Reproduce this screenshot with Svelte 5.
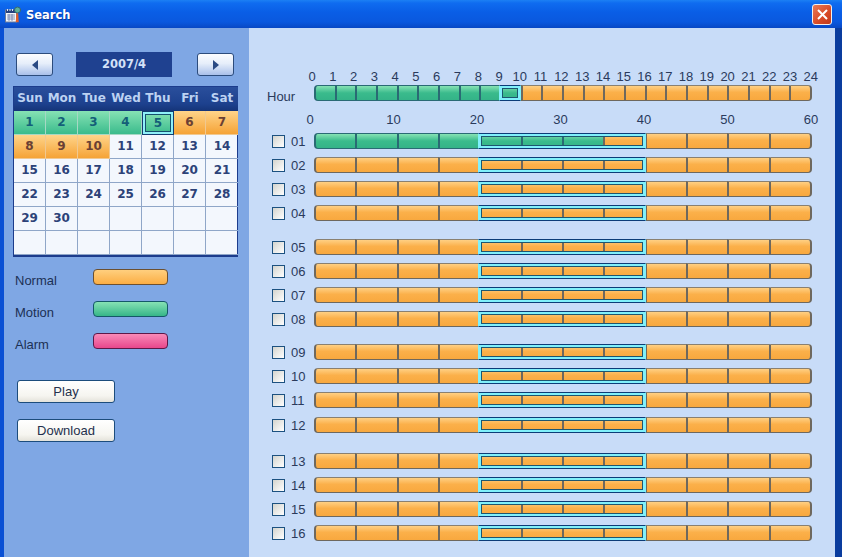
<script lang="ts">
	// Playback search dialog: month calendar on the left, channel timelines on the right.
	const weekdays = ['Sun', 'Mon', 'Tue', 'Wed', 'Thu', 'Fri', 'Sat'];
	const motionDays = [1, 2, 3, 4, 5];
	const normalDays = [6, 7, 8, 9, 10];
	const selectedDay = 5;
	const days: (number | null)[] = [
		...Array.from({ length: 30 }, (_, i) => i + 1),
		...Array(12).fill(null)
	];

	const hourLabels = Array.from({ length: 25 }, (_, i) => i);
	const minuteLabels = [0, 10, 20, 30, 40, 50, 60];
	const legend = [
		{ label: 'Normal', kind: 'normal' },
		{ label: 'Motion', kind: 'motion' },
		{ label: 'Alarm', kind: 'alarm' }
	];

	const groups = [
		[1, 2, 3, 4],
		[5, 6, 7, 8],
		[9, 10, 11, 12],
		[13, 14, 15, 16]
	];

	function channelMotion(ch: number) {
		return ch === 1 ? 7 : 0;
	}

	function dayClass(d: number | null) {
		if (d === null) return '';
		if (motionDays.includes(d)) return 'motion';
		if (normalDays.includes(d)) return 'normal';
		return '';
	}

	const pad = (n: number) => String(n).padStart(2, '0');
</script>

{#snippet timeline(count: number, motion: number, selStart: number, selWidth: number)}
	<div class="bar">
		{#each Array(count) as _, i}
			<span class="seg" class:motion={i < motion}></span>
		{/each}
		<span class="sel" style="left: {selStart}px; width: {selWidth}px"></span>
	</div>
{/snippet}

<div class="window">
	<header class="titlebar">
		<svg class="app-icon" viewBox="0 0 17 17" width="17" height="17">
			<rect x="0.5" y="4" width="11" height="12" fill="#f4f6fa" stroke="#6a7a9a" />
			<rect x="1" y="4" width="10" height="3" fill="#24407f" />
			<path d="M2 9h8M2 11h8M2 13h8M4 8v7M7 8v7" stroke="#6a7ca8" stroke-width="0.8" />
			<path d="M2.5 3v2M5 3v2M7.5 3v2" stroke="#dfe6f4" stroke-width="1" />
			<circle cx="12.5" cy="4" r="3" fill="#5cb09c" stroke="#35666c" />
			<path d="M11.2 7.2l-.4 9h3l-.6-9z" fill="#e0602a" />
		</svg>
		<span class="title">Search</span>
		<button class="close" aria-label="Close">
			<svg viewBox="0 0 11 11" width="11" height="11">
				<path d="M1 1l9 9M10 1l-9 9" stroke="#fff" stroke-width="2" />
			</svg>
		</button>
	</header>

	<div class="body">
		<aside class="sidebar">
			<div class="month-nav">
				<button class="nav-btn" aria-label="Previous month"><span class="arrow left"></span></button>
				<div class="month">2007/4</div>
				<button class="nav-btn" aria-label="Next month"><span class="arrow right"></span></button>
			</div>

			<div class="calendar">
				{#each weekdays as w}
					<div class="weekday">{w}</div>
				{/each}
				{#each days as d}
					<div class="day {dayClass(d)}" class:selected={d === selectedDay}>{d ?? ''}</div>
				{/each}
			</div>

			<div class="legend">
				{#each legend as item}
					<span class="legend-label">{item.label}</span>
					<span class="swatch {item.kind}"></span>
				{/each}
			</div>

			<div class="actions">
				<button class="action">Play</button>
				<button class="action">Download</button>
			</div>
		</aside>

		<main class="content">
			<div class="ticks hours">
				{#each hourLabels as h}
					<span>{h}</span>
				{/each}
			</div>
			<div class="row hour-row">
				<span class="hour-label">Hour</span>
				{@render timeline(24, 10, 185, 22)}
			</div>
			<div class="ticks minutes">
				{#each minuteLabels as m}
					<span>{m}</span>
				{/each}
			</div>

			{#each groups as group}
				<div class="group">
					{#each group as ch}
						<div class="row">
							<input class="check" type="checkbox" aria-label="Channel {ch}" />
							<span class="channel">{pad(ch)}</span>
							{@render timeline(12, channelMotion(ch), 164, 168)}
						</div>
					{/each}
				</div>
			{/each}
		</main>
	</div>
</div>

<style>
	:global(body) {
		margin: 0;
	}

	.window {
		display: flex;
		flex-direction: column;
		width: 842px;
		height: 557px;
		overflow: hidden;
		font-family: 'Liberation Sans', Arial, sans-serif;
		font-size: 13px;
		color: #2a3a5c;
	}

	.titlebar {
		display: flex;
		align-items: center;
		flex: 0 0 28px;
		box-sizing: border-box;
		padding: 0 10px 0 5px;
		background: linear-gradient(#1c80f4 0, #0f6cf0 3px, #0a5ee6 12px, #0a58de 22px, #0848c4 28px);
	}

	.app-icon {
		margin-right: 4px;
	}

	.title {
		padding-top: 2px;
		color: #fff;
		font-family: 'DejaVu Sans', sans-serif;
		font-weight: 700;
		font-size: 11.5px;
		text-shadow: 1px 1px 0 #0a3a9c;
	}

	.close {
		display: flex;
		align-items: center;
		justify-content: center;
		box-sizing: border-box;
		width: 20px;
		height: 21px;
		margin-left: auto;
		padding: 0;
		border: 1px solid #f4f0ec;
		border-radius: 3px;
		background: linear-gradient(135deg, #e87a58, #d84a26 60%, #c03a1c);
	}

	.body {
		display: flex;
		flex: 1;
		min-height: 0;
		border-left: 4px solid #0a50d4;
		border-right: 7px solid #0a3c9e;
	}

	/* Left column */
	.sidebar {
		flex: 0 0 245px;
		box-sizing: border-box;
		padding: 24px 0 0 9px;
		background: #7fa7e4;
	}

	.month-nav {
		display: flex;
		align-items: center;
		justify-content: space-between;
		width: 218px;
		margin-left: 3px;
	}

	.nav-btn {
		display: flex;
		align-items: center;
		justify-content: center;
		box-sizing: border-box;
		width: 37px;
		height: 23px;
		padding: 0;
		border: 1px solid #2c4c7c;
		border-radius: 3px;
		background: linear-gradient(#fbfcff, #e6eefa 45%, #a9c0ea);
	}

	.arrow {
		width: 0;
		height: 0;
		border-top: 5px solid transparent;
		border-bottom: 5px solid transparent;
	}

	.arrow.left {
		border-right: 6px solid #2a4a84;
	}

	.arrow.right {
		border-left: 6px solid #2a4a84;
	}

	.month {
		width: 96px;
		height: 25px;
		margin-right: 2px;
		line-height: 25px;
		text-align: center;
		background: #1f4190;
		color: #d4e2f8;
		font-family: 'DejaVu Sans', sans-serif;
		font-weight: 700;
		font-size: 11.5px;
	}

	.calendar {
		display: grid;
		grid-template-columns: repeat(7, 32px);
		grid-auto-rows: 24px;
		width: 225px;
		box-sizing: border-box;
		margin-top: 9px;
		border: solid #1c3c8c;
		border-width: 1px 1px 2px 1px;
		background: #f3f7fd;
	}

	.weekday {
		text-align: center;
		line-height: 22px;
		background: linear-gradient(#2a4f9c, #1d418e 70%, #153478);
		color: #bcd2f2;
		font-family: 'DejaVu Sans', sans-serif;
		font-weight: 700;
		font-size: 12px;
		white-space: nowrap;
	}

	.day {
		box-sizing: border-box;
		border-right: 1px solid #8fa6c8;
		border-bottom: 1px solid #8fa6c8;
		text-align: center;
		line-height: 23px;
		color: #2c4278;
		font-family: 'DejaVu Sans', sans-serif;
		font-weight: 700;
		font-size: 12px;
	}

	.day:nth-child(7n) {
		border-right: none;
	}

	.day.motion {
		background: linear-gradient(#86e2b4, #3abb8c);
		color: #145f78;
		border-color: #a6d8c4;
	}

	.day.normal {
		background: linear-gradient(#ffd48a, #f5a336);
		color: #6a4034;
		border-color: #f0c890;
	}

	.day.selected {
		border: 1px solid #123c70;
		box-shadow: inset 0 0 0 2px #8ff0f8, inset 0 0 0 3px #14506e;
	}

	.legend {
		display: grid;
		grid-template-columns: 78px 75px;
		grid-auto-rows: 16px;
		row-gap: 16px;
		align-items: center;
		margin: 12px 0 0 2px;
	}

	.legend-label {
		position: relative;
		top: 3px;
		color: #1c3054;
	}

	.swatch {
		height: 16px;
		box-sizing: border-box;
		border: 1px solid #44505c;
		border-radius: 4px;
	}

	.swatch.normal {
		background: linear-gradient(#ffcf7e, #fbae44);
		border-color: #6c5030;
	}

	.swatch.motion {
		background: linear-gradient(#86e2b4, #36b688);
		border-color: #145868;
	}

	.swatch.alarm {
		background: linear-gradient(#f88ab8, #e8478c);
		border-color: #5c1848;
	}

	.actions {
		display: flex;
		flex-direction: column;
		gap: 16px;
		margin: 31px 0 0 4px;
	}

	.action {
		box-sizing: border-box;
		width: 98px;
		height: 23px;
		padding: 0;
		border: 1px solid #1c4c7c;
		border-radius: 3px;
		background: linear-gradient(#fff, #f6f5f0 70%, #e4e2da);
		color: #24304c;
		font: 13px 'Liberation Sans', Arial, sans-serif;
	}

	/* Timelines */
	.content {
		flex: 1;
		box-sizing: border-box;
		padding-top: 42px;
		background: #c8dcf8;
	}

	.ticks {
		display: flex;
		justify-content: space-between;
		height: 14px;
		line-height: 14px;
	}

	/* zero-width boxes so each label centres on its tick */
	.ticks span {
		display: flex;
		justify-content: center;
		width: 0;
		white-space: nowrap;
	}

	.hours {
		width: 499px;
		margin-left: 63px;
	}

	.minutes {
		width: 501px;
		margin: 12px 0 2px 61px;
	}

	.row {
		display: flex;
		align-items: center;
		height: 24px;
		padding-left: 23px;
	}

	.hour-row {
		height: 17px;
		padding-left: 18px;
	}

	.hour-label {
		position: relative;
		top: 4px;
		width: 47px;
	}

	.group:nth-of-type(5) {
		margin-top: 10px;
	}

	.group:nth-of-type(6) {
		margin-top: 9px;
	}

	.group:nth-of-type(6) .row:last-child {
		margin-top: 1px;
	}

	.group:nth-of-type(7) {
		margin-top: 12px;
	}

	.check {
		appearance: none;
		box-sizing: border-box;
		width: 13px;
		height: 13px;
		margin: 0 6px 0 0;
		border: 1px solid #1c5180;
		background: linear-gradient(135deg, #d4d4ce, #fff);
	}

	.channel {
		width: 23px;
	}

	.bar {
		position: relative;
		display: flex;
		width: 498px;
		height: 16px;
	}

	.seg {
		flex: 1;
		background: linear-gradient(#ffd084, #fbb04a 45%, #f8a83e);
		border: solid #6e685e;
		border-top-color: #8a8070;
		border-width: 1px 0 1px 2px;
	}

	.seg:first-child {
		border-radius: 4px 0 0 4px;
	}

	.seg:nth-last-child(2) {
		border-right-width: 2px;
		border-radius: 0 4px 4px 0;
	}

	.seg.motion {
		background: linear-gradient(#86e2b4, #3abb8c 50%, #34b388);
		border-color: #2a6a74;
	}

	.sel {
		position: absolute;
		top: 0;
		bottom: 0;
		box-sizing: border-box;
		border: 1px solid #80f0fa;
		border-top-color: #0c3c78;
		border-bottom-color: #0c3c78;
		box-shadow: inset 0 0 0 2px #80f0fa, inset 0 0 0 3px #1c5670;
	}
</style>
